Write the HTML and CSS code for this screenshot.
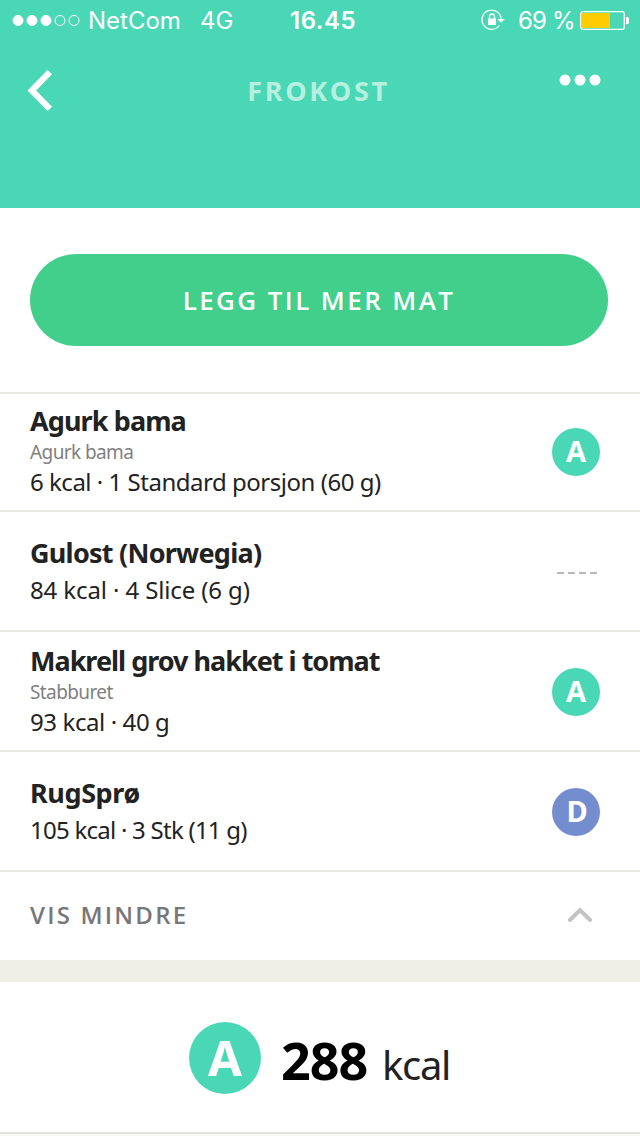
FILE: index.html
```html
<!DOCTYPE html>
<html lang="nb">
<head>
<meta charset="utf-8">
<title>Frokost</title>
<link rel="stylesheet" href="styles.css">
</head>
<body>
<header class="header">
  <div class="status">
    <svg class="signal" width="68" height="12" viewBox="0 0 68 12" fill="#fff" stroke="#fff">
      <circle cx="6" cy="6.5" r="5"/><circle cx="20" cy="6.5" r="5"/><circle cx="34" cy="6.5" r="5"/>
      <circle cx="48" cy="6.5" r="5" fill="none"/><circle cx="62" cy="6.5" r="5" fill="none"/>
    </svg>
    <span class="carrier">NetCom</span>
    <span class="network">4G</span>
    <span class="clock">16.45</span>
    <svg class="lock" width="24" height="22" viewBox="0 0 24 22" fill="none" stroke="#fff" stroke-width="1.3">
      <path d="M18.6 16A9.6 9.6 0 1 1 20.2 10.5"/>
      <path d="M16.4 10h7.4l-3.7 3.8z" fill="#fff" stroke="none"/>
      <rect x="7" y="9.5" width="8" height="6.5" fill="#fff" stroke="none"/>
      <path d="M8.5 10V8a2.5 3 0 0 1 5 0v2"/>
    </svg>
    <span class="percent">69 %</span>
    <svg class="battery" width="50" height="20" viewBox="0 0 50 20">
      <rect x=".7" y="1.7" width="43.6" height="17.6" rx="2.2" fill="none" stroke="#fff" stroke-width="1.3"/>
      <rect x="2" y="3" width="28" height="15" fill="#fc0"/>
      <path d="M46 7h1q2 0 2 1.6v3.8q0 1.6-2 1.6h-1z" fill="#fff"/>
    </svg>
  </div>
  <nav class="nav">
    <svg class="back" width="26" height="42" viewBox="0 0 26 42" fill="none" stroke="#fff" stroke-width="6.2">
      <path d="M22.8 2.2 4.8 20.5 22.8 38.8"/>
    </svg>
    <h1 class="heading">FROKOST</h1>
    <svg class="more" width="42" height="12" viewBox="0 0 42 12" fill="#fff">
      <circle cx="6" cy="6" r="5.5"/><circle cx="21" cy="6" r="5.5"/><circle cx="36" cy="6" r="5.5"/>
    </svg>
  </nav>
</header>
<main>
  <section class="action"><button class="add">LEGG TIL MER MAT</button></section>
  <ul class="foods">
    <li class="food first cucumber">
      <div class="info"><h2 class="name">Agurk bama</h2><p class="brand">Agurk bama</p><p class="detail">6 kcal · 1 Standard porsjon (60 g)</p></div>
      <span class="grade">A</span>
    </li>
    <li class="food plain cheese">
      <div class="info"><h2 class="name">Gulost (Norwegia)</h2><p class="detail">84 kcal · 4 Slice (6 g)</p></div>
      <svg class="dashes" width="42" height="3" viewBox="0 0 42 3" fill="#b8b8b8"><path d="M1 1h7v2H1zM12 1h7v2h-7zM23 1h7v2h-7zM34 1h7v2h-7z"/></svg>
    </li>
    <li class="food mackerel">
      <div class="info"><h2 class="name">Makrell grov hakket i tomat</h2><p class="brand">Stabburet</p><p class="detail">93 kcal · 40 g</p></div>
      <span class="grade">A</span>
    </li>
    <li class="food plain crispbread">
      <div class="info"><h2 class="name">RugSprø</h2><p class="detail">105 kcal · 3 Stk (11 g)</p></div>
      <span class="grade grade-d">D</span>
    </li>
  </ul>
  <div class="toggle">
    <span>VIS MINDRE</span>
    <svg class="chevron" width="24" height="16" viewBox="0 0 24 16" fill="none" stroke="#c3c3c3" stroke-width="4" stroke-linecap="round"><path d="M2 13 12 3 22 13"/></svg>
  </div>
  <section class="total">
    <span class="grade grade-large">A</span>
    <strong class="amount">288</strong>
    <span class="unit">kcal</span>
  </section>
</main>
</body>
</html>
```

FILE: styles.css
```css
* { box-sizing: border-box; margin: 0; padding: 0; }
body {
  width: 640px;
  height: 1136px;
  overflow: hidden;
  background: #f8f8f3;
  color: #222;
  font-family: "Noto Sans", sans-serif;
}
svg { display: block; flex: none; }
.header { height: 208px; background: #4ad7b5; color: #fff; }
.status {
  display: flex;
  align-items: center;
  height: 40px;
  padding-left: 12px;
  font: 24px/40px Inter, sans-serif;
  white-space: nowrap;
}
.status span { padding-top: 2px; }
.carrier { width: 112px; margin-left: 8px; }
.network { width: 90px; }
.clock { width: 190px; font-weight: 600; letter-spacing: .5px; }
.lock { margin-left: 1px; }
.percent { width: 62px; margin-left: 13px; letter-spacing: -.8px; }
.nav { display: flex; justify-content: space-between; padding: 30px 39px 0 27px; }
.heading {
  padding: 3px 0 0 25px;
  font-family: "Open Sans", sans-serif;
  font-size: 27px;
  line-height: 36px;
  font-weight: 700;
  letter-spacing: 2.6px;
  color: #b7efe1;
}
.more { margin-top: 4px; }
.action { height: 184px; padding: 46px 32px 0 30px; background: #fff; }
.add {
  display: block;
  width: 578px;
  height: 92px;
  border: 0;
  border-radius: 46px;
  background: #42cf8c;
  color: #fff;
  font: 600 26px/92px "Open Sans", sans-serif;
  letter-spacing: 2.4px;
}
.foods { list-style: none; }
.food {
  display: flex;
  justify-content: space-between;
  height: 120px;
  padding: 11px 40px 0 30px;
  border-top: 2px solid #eaeae5;
  background: #fff;
  white-space: nowrap;
}
.first { height: 118px; padding-top: 9px; }
.plain { padding-top: 23px; }
.name { font-size: 27px; line-height: 36px; font-weight: 700; letter-spacing: -.9px; }
.brand { font-size: 19px; line-height: 26px; color: #808080; letter-spacing: -.6px; }
.detail { font-size: 24px; line-height: 34px; letter-spacing: -.48px; }
.plain .detail { margin-top: 2px; }
.cheese .name { letter-spacing: -.75px; }
.cheese .detail { letter-spacing: -.12px; }
.mackerel .name { letter-spacing: -1px; }
.mackerel .detail { letter-spacing: -.4px; }
.crispbread .name { letter-spacing: -.4px; }
.crispbread .detail { letter-spacing: -.75px; }
.grade {
  flex: none;
  width: 48px;
  height: 48px;
  margin-top: 25px;
  border-radius: 50%;
  background: #4ad7b5;
  color: #fff;
  font-size: 29px;
  line-height: 46px;
  font-weight: 700;
  text-align: center;
}
.plain .grade { margin-top: 13px; }
.grade-d { padding-left: 2px; background: #748dcf; }
.dashes { margin: 36px 2px 0 0; }
.toggle {
  display: flex;
  align-items: center;
  justify-content: space-between;
  height: 90px;
  padding: 0 48px 3px 30px;
  border-top: 2px solid #eaeae5;
  background: #fff;
  color: #777;
  font-family: "Open Sans", sans-serif;
  font-size: 24px;
  font-weight: 600;
  letter-spacing: 2.2px;
}
.total {
  display: flex;
  height: 174px;
  padding: 40px 0 0 189px;
  border-top: 22px solid #efefe7;
  border-bottom: 2px solid #e2e2db;
  background: #fff;
}
.total .grade-large { width: 72px; height: 72px; margin: 0; font-size: 49px; line-height: 70px; }
.amount { width: 101px; margin-left: 20px; color: #000; font-size: 52px; line-height: 76px; letter-spacing: -1px; }
.unit { font-size: 40px; line-height: 85px; letter-spacing: -1.3px; }
```
